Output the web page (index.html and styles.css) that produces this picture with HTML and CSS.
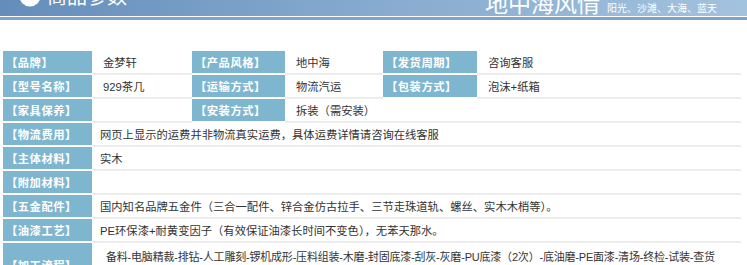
FILE: index.html
```html
<!DOCTYPE html>
<html lang="zh-CN">
<head>
<meta charset="utf-8">
<title>商品参数</title>
<link rel="stylesheet" href="styles.css">
</head>
<body>
<div class="page">
  <header class="banner">
    <svg class="banner-icon" width="22" height="22" viewBox="0 0 22 22" aria-hidden="true">
      <circle cx="11" cy="11" r="10.5" fill="#ffffff"/>
      <path d="M5 9 L11 15 L17 9 L14 9 L11 12 L8 9 Z" fill="#6f98c3"/>
    </svg>
    <h1 class="banner-title">商品参数</h1>
    <div class="banner-spacer"></div>
    <span class="banner-slogan">地中海风情</span>
    <span class="banner-sub">阳光、沙滩、大海、蓝天</span>
  </header>
  <div class="rule"></div>

  <div class="params">
    <div class="lab">【品牌】</div>
    <div class="val">金梦轩</div>
    <div class="lab">【产品风格】</div>
    <div class="val">地中海</div>
    <div class="lab">【发货周期】</div>
    <div class="val">咨询客服</div>

    <div class="lab">【型号名称】</div>
    <div class="val">929茶几</div>
    <div class="lab">【运输方式】</div>
    <div class="val">物流汽运</div>
    <div class="lab">【包装方式】</div>
    <div class="val">泡沫+纸箱</div>

    <div class="lab">【家具保养】</div>
    <div class="val"></div>
    <div class="lab">【安装方式】</div>
    <div class="val span-rest">拆装（需安装）</div>

    <div class="lab">【物流费用】</div>
    <div class="val span-all">网页上显示的运费并非物流真实运费，具体运费详情请咨询在线客服</div>

    <div class="lab">【主体材料】</div>
    <div class="val span-all">实木</div>

    <div class="lab">【附加材料】</div>
    <div class="val span-all"></div>

    <div class="lab">【五金配件】</div>
    <div class="val span-all">国内知名品牌五金件（三合一配件、锌合金仿古拉手、三节走珠道轨、螺丝、实木木梢等）。</div>

    <div class="lab">【油漆工艺】</div>
    <div class="val span-all">PE环保漆+耐黄变因子（有效保证油漆长时间不变色），无苯天那水。</div>

    <div class="lab tall">【加工流程】</div>
    <div class="val span-all tall top">备料-电脑精裁-排钻-人工雕刻-锣机成形-压料组装-木磨-封固底漆-刮灰-灰磨-PU底漆（2次）-底油磨-PE面漆-清场-终检-试装-查货</div>
  </div>
</div>
</body>
</html>
```

FILE: styles.css
```css
html, body {
  margin: 0;
  padding: 0;
  background: #ffffff;
}

.page {
  width: 747px;
  height: 265px;
  overflow: hidden;
  font-family: "Liberation Sans", "Noto Sans CJK SC", sans-serif;
}

.banner {
  height: 16px;
  overflow: hidden;
  display: flex;
  align-items: flex-end;
  background: linear-gradient(90deg, #648dbb 0%, #84a8cd 45%, #a2c2de 100%);
  color: #ffffff;
}

.banner-icon {
  flex: none;
  margin-left: 19px;
  margin-bottom: 9px;
}

.banner-title {
  margin: 0 0 10px 6px;
  font-size: 20px;
  line-height: 20px;
  font-weight: normal;
  font-family: "Noto Sans CJK SC", sans-serif;
}

.banner-spacer {
  flex: 1;
}

.banner-slogan {
  font-size: 23px;
  line-height: 23px;
  margin-bottom: 2px;
  font-family: "Noto Sans CJK SC", sans-serif;
}

.banner-sub {
  font-size: 10px;
  line-height: 10px;
  margin: 0 30px 3px 7px;
  font-family: "Noto Sans CJK SC", sans-serif;
}

.rule {
  height: 1px;
  background: #d3e2f0;
}
.rule::after {
  content: "";
  display: block;
  height: 3px;
  margin-top: 1px;
  background: #7ea5c9;
}

.params {
  margin: 33px 0 0 3px;
  width: 738px;
  display: grid;
  grid-template-columns: 89px 100px 93px 98px 94px 1fr;
  grid-auto-rows: 24px;
  font-size: 11.3px;
}

.lab {
  background: #7fb6cf;
  color: #ffffff;
  font-weight: bold;
  letter-spacing: 0.5px;
  display: flex;
  align-items: center;
  padding-left: 3px;
  border-bottom: 2px solid #ffffff;
  white-space: nowrap;
  overflow: hidden;
}

.val {
  color: #333333;
  display: flex;
  align-items: center;
  padding-left: 11px;
  border-bottom: 2px solid #ececec;
  white-space: nowrap;
  overflow: hidden;
}

.span-rest {
  grid-column: 4 / 7;
}

.span-all {
  grid-column: 2 / 7;
  padding-left: 8px;
}

.tall {
  grid-row: span 2;
  height: 44px;
}

.top {
  align-items: flex-start;
  padding-top: 5px;
  padding-left: 14px;
  font-size: 11px;
  letter-spacing: -0.2px;
}
```
